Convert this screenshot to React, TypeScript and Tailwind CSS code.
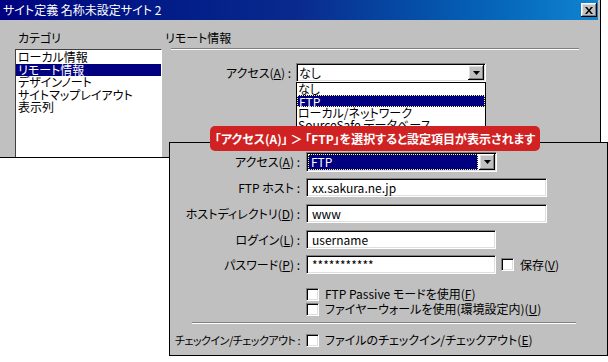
import React from 'react'

const sunken =
  'border border-t-[#808080] border-l-[#808080] border-r-white border-b-white shadow-[inset_1px_1px_0_#000,inset_-1px_-1px_0_#dfdfdf]'

const raised =
  'bg-[#c0c0c0] shadow-[inset_-1px_-1px_0_#000,inset_1px_1px_0_#fff,inset_-2px_-2px_0_#808080,inset_2px_2px_0_#dfdfdf]'

function DropButton() {
  return (
    <div className={`w-[16px] h-full shrink-0 flex items-center justify-center ${raised}`}>
      <svg width="7" height="4" viewBox="0 0 7 4">
        <path d="M0 0h7L3.5 4z" fill="#000" />
      </svg>
    </div>
  )
}

function Check() {
  return <div className={`w-[13px] h-[13px] shrink-0 bg-white ${sunken}`} />
}

function Key({ children }: { children: string }) {
  return <span className="underline underline-offset-[1px]">{children}</span>
}

function Row({
  label,
  className = '',
  labelClass = '',
  children,
}: {
  label: React.ReactNode
  className?: string
  labelClass?: string
  children?: React.ReactNode
}) {
  return (
    <div className={`flex items-center ${className}`}>
      <div className={`w-[130px] shrink-0 flex justify-end whitespace-nowrap ${labelClass}`}>
        <span>{label}</span>
      </div>
      <div className="ml-[6px] flex items-center">{children}</div>
    </div>
  )
}

function TextBox({ value, width }: { value: string; width: string }) {
  return (
    <div className={`${width} h-[19px] bg-white flex items-center pl-[5px] whitespace-nowrap ${sunken}`}>
      {value}
    </div>
  )
}

const categories = ['ローカル情報', 'リモート情報', 'デザインノート', 'サイトマップレイアウト', '表示列']

export default function App() {
  return (
    <div className="relative w-[608px] h-[362px] bg-white overflow-hidden text-[12px] leading-[14px] text-black font-['Noto_Sans_CJK_JP',sans-serif] [font-feature-settings:'palt']">
      {/* dialog (cropped) */}
      <div className="w-[601px] h-[158px] bg-[#c0c0c0] border-r border-b border-black pr-[2px] flex flex-col overflow-hidden">
        <div className="h-[20px] shrink-0 flex items-center justify-between pl-[3px] pr-[1px] text-white bg-gradient-to-r from-[#000080] via-[#0a2a8e] to-[#1084d0]">
          <span className="whitespace-nowrap">サイト定義 名称未設定サイト 2</span>
          <div className={`w-[16px] h-[14px] flex items-center justify-center ${raised}`}>
            <svg width="8" height="7" viewBox="0 0 8 7">
              <path d="M0 0h2l2 2.5L6 0h2L5 3.5 8 7H6L4 4.5 2 7H0l3-3.5z" fill="#000" />
            </svg>
          </div>
        </div>

        <div className="flex pt-[11px] pl-[15px]">
          <div className="w-[147px] shrink-0 flex flex-col">
            <div className="pl-[3px] whitespace-nowrap">カテゴリ</div>
            <div className="mt-[4px] h-[130px] bg-white border-l border-t border-[#404040] border-r border-r-white pt-[1px]">
              {categories.map((c, i) => (
                <div
                  key={c}
                  className={`h-[12.5px] leading-[12.5px] pl-[2px] whitespace-nowrap ${
                    i === 1 ? 'bg-[#000080] text-white' : ''
                  }`}
                >
                  {c}
                </div>
              ))}
            </div>
          </div>

          <div className="ml-[3px] flex-1 flex flex-col">
            <div className="whitespace-nowrap">リモート情報</div>
            <div className="ml-[6px] mr-[19px] mt-[3px] h-[2px] border-t border-[#808080] border-b border-b-white" />
            <div className="mt-[13px] flex items-center">
              <div className="w-[126px] text-right whitespace-nowrap">
                アクセス(<Key>A</Key>) :
              </div>
              <div className={`ml-[5px] w-[190px] h-[19px] bg-white flex p-[1px] ${sunken}`}>
                <div className="flex-1 flex items-center pl-[1px]">なし</div>
                <DropButton />
              </div>
            </div>
            <div className="ml-[131px] w-[190px] border border-black bg-white">
              <div className="h-[12px] leading-[12px] pl-[1px]">なし</div>
              <div className="h-[12px] leading-[12px] pl-[1px] bg-[#000080] text-white border border-dotted border-[#ffff80]">
                FTP
              </div>
              <div className="h-[12px] leading-[12px] pl-[1px]">ローカル/ネットワーク</div>
              <div className="h-[12px] leading-[12px] pl-[1px]">SourceSafe データベース</div>
            </div>
          </div>
        </div>
      </div>

      {/* FTP settings panel laid over the dialog */}
      <div className="absolute left-[169px] top-[142px] w-[439px] h-[214px] border border-black bg-[#c0c0c0] pt-[9px] flex flex-col">
        <Row label={<>アクセス(<Key>A</Key>) :</>}>
          <div className={`w-[191px] h-[20px] bg-white flex p-[1px] ${sunken}`}>
            <div className="flex-1 flex items-center mr-[1px] pl-[2px] bg-[#000080] text-white border border-dotted border-[#ffff80]">
              FTP
            </div>
            <DropButton />
          </div>
        </Row>
        <Row className="mt-[6px]" label="FTP ホスト :">
          <TextBox value="xx.sakura.ne.jp" width="w-[241px]" />
        </Row>
        <Row className="mt-[7px]" label={<>ホストディレクトリ(<Key>D</Key>) :</>}>
          <TextBox value="www" width="w-[241px]" />
        </Row>
        <Row className="mt-[7px]" label={<>ログイン(<Key>L</Key>) :</>}>
          <TextBox value="username" width="w-[190px]" />
        </Row>
        <Row className="mt-[6px]" label={<>パスワード(<Key>P</Key>) :</>}>
          <TextBox value="***********" width="w-[190px]" />
          <div className="ml-[5px]">
            <Check />
          </div>
          <span className="ml-[6px] whitespace-nowrap">
            保存(<Key>V</Key>)
          </span>
        </Row>
        <Row className="mt-[13px]" label="">
          <Check />
          <span className="ml-[6px] whitespace-nowrap">
            FTP Passive モードを使用(<Key>F</Key>)
          </span>
        </Row>
        <Row className="mt-[1px]" label="">
          <Check />
          <span className="ml-[6px] whitespace-nowrap">
            ファイヤーウォールを使用(環境設定内)(<Key>U</Key>)
          </span>
        </Row>
        <div className="ml-[22px] mt-[6px] w-[384px] h-[2px] border-t border-[#808080] border-b border-b-white" />
        <Row
          className="mt-[9px]"
          labelClass="text-[11px] tracking-[-0.5px]"
          label="チェックイン/チェックアウト :"
        >
          <Check />
          <span className="ml-[6px] whitespace-nowrap">
            ファイルのチェックイン/チェックアウト(<Key>E</Key>)
          </span>
        </Row>
      </div>

      {/* callout */}
      <div className="absolute left-[210px] top-[126px] w-[330px] h-[25px] rounded-[5px] bg-[#d02222] text-white font-bold flex items-center justify-center whitespace-nowrap">
        「アクセス(A)」 ＞ 「FTP」を選択すると設定項目が表示されます
      </div>
    </div>
  )
}
